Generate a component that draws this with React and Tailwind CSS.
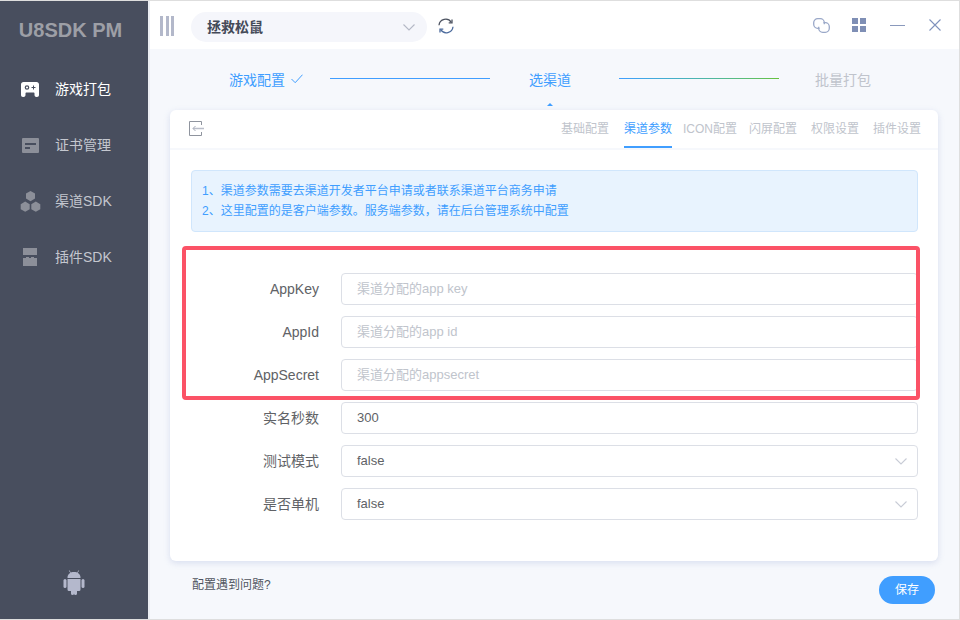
import React from "react";

const FONT = "[font-family:'Liberation_Sans','Noto_Sans_CJK_SC',sans-serif]";

function GameIcon() {
  return (
    <svg width="18" height="15" viewBox="0 0 18 15" fill="currentColor">
      <path fillRule="evenodd" d="M2.500 0h13C17 0 18 1 18 2.500V13c0 1.200-.8 2-2 2h-.5c-1.200 0-2-.8-2-2v-1.500c0-.6-.4-1-1-1h-7c-.6 0-1 .4-1 1V13c0 1.200-.8 2-2 2H2c-1.200 0-2-.8-2-2V2.500C0 1 1 0 2.500 0zM6 3.200a2.300 2.300 0 100 4.600 2.300 2.300 0 000-4.600zm0 1.200a1.100 1.100 0 110 2.200 1.100 1.100 0 010-2.200zM12 3.500V5h-1.500v1H12v1.500h1V6h1.500V5H13V3.500h-1z" />
    </svg>
  );
}

function CertIcon() {
  return (
    <svg width="17" height="15" viewBox="0 0 17 15" fill="currentColor">
      <path fillRule="evenodd" d="M1 0h15a1 1 0 011 1v13a1 1 0 01-1 1H1a1 1 0 01-1-1V1a1 1 0 011-1zm2 5v2h11V5H3zm0 4v2h5V9H3z" />
    </svg>
  );
}

function HexIcon() {
  return (
    <svg width="21" height="21" viewBox="0 0 21 21" fill="currentColor">
      <path d="M10.500 0l4.500 2.600v5L10.500 10.200 6 7.600v-5z" />
      <path d="M5.200 10.600l4.500 2.600v5l-4.500 2.600L.7 18.200v-5z" />
      <path d="M15.800 10.600l4.500 2.600v5l-4.500 2.600-4.500-2.600v-5z" />
    </svg>
  );
}

function PluginIcon() {
  return (
    <svg width="14" height="18" viewBox="0 0 14 18" fill="currentColor">
      <path d="M0 0h14v7H0z" />
      <path d="M0 10h3V9h3v1h2V9h3v1h3v8H0z" />
    </svg>
  );
}

function AndroidIcon() {
  return (
    <svg width="22" height="25" viewBox="0 0 22 25" fill="currentColor">
      <path d="M4.500 7.500C4.500 4 7.500 2 11 2s6.500 2 6.500 5.500V8h-13z" />
      <path d="M6.300.3l1.800 2.400-.5.4L5.800.7zM15.700.3l.5.4-1.800 2.400-.5-.4z" />
      <path d="M4.500 9h13v10.500a1.500 1.500 0 01-1.500 1.500h-2v2.500a1.500 1.500 0 01-3 0V21h0v2.500a1.500 1.500 0 01-3 0V21H6a1.500 1.500 0 01-1.500-1.500z" />
      <rect x="0.500" y="9" width="3" height="9" rx="1.500" />
      <rect x="18.500" y="9" width="3" height="9" rx="1.500" />
    </svg>
  );
}

function BackIcon() {
  return (
    <svg className="-mt-[2px]" width="15" height="15" viewBox="0 0 15 15" fill="none">
      <path d="M12.500 4V.5H.5v14h12V11" stroke="#8f949e" />
      <path d="M15 7.500H4" stroke="#b9bdc9" strokeWidth="1.500" />
      <path d="M6.500 5L4 7.500 6.500 10" stroke="#a8adba" />
    </svg>
  );
}

function LinkIcon() {
  return (
    <svg width="17" height="15" viewBox="0 0 17 15" fill="none" stroke="#9aa8c8" strokeWidth="1.300">
      <path d="M6.500 10.300H4.700a4 4 0 01-4-4V4.700a4 4 0 014-4h2.600a4 4 0 014 4v1.600" />
      <path d="M10.500 4.700h1.800a4 4 0 014 4v1.600a4 4 0 01-4 4H9.700a4 4 0 01-4-4V8.700" />
    </svg>
  );
}

function RefreshIcon() {
  return (
    <svg width="16" height="16" viewBox="0 0 16 16" fill="none" strokeWidth="1.300">
      <path d="M1 7.200A6.700 6.700 0 0 1 13.300 4.300" stroke="#4d5361" />
      <path d="M14 1.500v3.300h-3.300" stroke="#4d5361" />
      <path d="M15 8.800A6.700 6.700 0 0 1 2.700 11.700" stroke="#4b6a9c" />
      <path d="M2 14.500v-3.300h3.300" stroke="#4b6a9c" />
    </svg>
  );
}

function Chevron({ color }) {
  return (
    <svg width="12" height="7" viewBox="0 0 12 7" fill="none" stroke={color} strokeWidth="1.100">
      <path d="M.5.5L6 6l5.500-5.500" />
    </svg>
  );
}

function GridIcon() {
  return (
    <div className="grid grid-cols-2 gap-[2px] w-[14px] h-[14px]">
      <span className="bg-[#7f8fb5]" />
      <span className="bg-[#7f8fb5]" />
      <span className="bg-[#7f8fb5]" />
      <span className="bg-[#7f8fb5]" />
    </div>
  );
}

function MenuItem({ icon, label, active }) {
  return (
    <div className={`flex items-center h-14 ${active ? "text-white" : "text-[#c4c7cf]"}`}>
      <span className={`w-[55px] shrink-0 flex justify-center pl-[5px] ${active ? "text-white" : "text-[#8c8f99]"}`}>
        {icon}
      </span>
      <span className="text-sm">{label}</span>
    </div>
  );
}

function Sidebar() {
  return (
    <aside className="w-[148px] shrink-0 bg-[#484e5e] flex flex-col items-stretch">
      <div className="h-[58px] flex items-center justify-center text-[20px] font-bold text-[#9d9fa6] pr-[7px]">
        U8SDK PM
      </div>
      <nav className="mt-[2px]">
        <MenuItem icon={<GameIcon />} label="游戏打包" active />
        <MenuItem icon={<CertIcon />} label="证书管理" />
        <MenuItem icon={<HexIcon />} label="渠道SDK" />
        <MenuItem icon={<PluginIcon />} label="插件SDK" />
      </nav>
      <div className="mt-auto mb-[24px] flex justify-center text-[#b4b8cc]">
        <AndroidIcon />
      </div>
    </aside>
  );
}

function Header() {
  return (
    <header className="h-[48px] bg-white flex items-center pl-[10px] pr-[18px] shrink-0">
      <div className="flex gap-[2.500px] h-5 w-[14px] mt-[2px]">
        <span className="w-[3px] bg-[#b3b8ca]" />
        <span className="w-[3px] bg-[#b3b8ca]" />
        <span className="w-[3px] bg-[#b3b8ca]" />
      </div>
      <div className="ml-[17px] mt-[4px] w-[236px] h-[30px] bg-[#f5f6fb] rounded-full flex items-center justify-between pl-4 pr-[12px]">
        <span className="text-sm font-bold text-[#444a58] -mt-px">拯救松鼠</span>
        <Chevron color="#b4b8c6" />
      </div>
      <div className="ml-[11px] mt-[2px]">
        <RefreshIcon />
      </div>
      <div className="ml-auto flex items-center">
        <LinkIcon />
        <div className="ml-[22px]">
          <GridIcon />
        </div>
        <span className="ml-[24px] w-[15px] h-px bg-[#8a99bc]" />
        <svg className="ml-[24px]" width="12" height="12" viewBox="0 0 12 12" fill="none" stroke="#7f92bd" strokeWidth="1.100">
          <path d="M.5.5l11 11M11.500.5l-11 11" />
        </svg>
      </div>
    </header>
  );
}

function Steps() {
  return (
    <div className="h-[61px] shrink-0 flex items-start pt-[21px] pl-[79px] text-sm">
      <span className="text-[#409eff] w-[56px] whitespace-nowrap">游戏配置</span>
      <svg className="ml-[6px] mt-[4px]" width="12" height="10" viewBox="0 0 12 10" fill="none" stroke="#409eff" strokeWidth="1">
        <path d="M.5 5l3.700 3.700L11.500.7" />
      </svg>
      <div className="w-[160px] h-px bg-[#409eff] ml-[27px] mt-[8px]" />
      <span className="text-[#409eff] ml-[39px] relative">
        选渠道
        <span className="absolute left-[18px] top-[33px] w-0 h-0 border-x-[3px] border-x-transparent border-b-[3px] border-b-[#409eff]" />
      </span>
      <div className="w-[160px] h-px bg-gradient-to-r from-[#409eff] to-[#67c23a] ml-[48px] mt-[8px]" />
      <span className="text-[#c0c4cc] ml-[36px]">批量打包</span>
    </div>
  );
}

function Tabs() {
  const tabs = [
    ["基础配置", "ml-0"],
    ["渠道参数", "ml-[15px]"],
    ["ICON配置", "ml-[11px]"],
    ["闪屏配置", "ml-[12px]"],
    ["权限设置", "ml-[14px]"],
    ["插件设置", "ml-[14px]"],
  ];
  return (
    <div className="h-[40px] flex items-center pl-[19px] pr-[17px] border-b-2 border-[#f6f8fc]">
      <BackIcon />
      <div className="ml-auto flex self-stretch text-xs">
        {tabs.map(([name, gap], i) => (
          <div
            key={name}
            className={`${gap} h-[38px] pt-px flex items-center border-b-2 ${
              i === 1 ? "text-[#409eff] border-[#409eff]" : "text-[#c0c4cc] border-transparent"
            }`}
          >
            {name}
          </div>
        ))}
      </div>
    </div>
  );
}

function Field({ label, placeholder, value, select }) {
  return (
    <div className="flex items-center h-8">
      <label className="w-[128px] -mt-px text-right text-sm text-[#606266] shrink-0">{label}</label>
      <div className="ml-[22px] flex-1 h-8 bg-white border border-[#dcdfe6] rounded-[4px] flex items-center justify-between pl-[15px] pr-[10px] text-[13px]">
        {placeholder ? (
          <span className="text-[#c0c4cc]">{placeholder}</span>
        ) : (
          <span className="text-[#606266]">{value}</span>
        )}
        {select && <Chevron color="#c8ccd6" />}
      </div>
    </div>
  );
}

export default function App() {
  return (
    <div className={`w-[960px] h-[620px] overflow-hidden flex bg-[#dedede] pt-px pr-px pb-px ${FONT}`}>
      <Sidebar />
      <main className="flex-1 border-l-2 border-[#eceef3] flex flex-col bg-[#f6f8fc] min-w-0">
        <Header />
        <Steps />
        <div className="ml-[20px] mr-[21px] h-[451px] shrink-0 bg-white rounded-[6px] shadow-[0_2px_6px_rgba(180,190,225,0.45)]">
          <Tabs />
          <div className="ml-[21px] mr-[20px] mt-5 h-[62px] bg-[#e8f3fe] border border-[#d0e6fc] rounded-[4px] flex flex-col justify-center gap-[6px] pl-[10px] text-xs leading-[14px] text-[#409eff]">
            <p>1、渠道参数需要去渠道开发者平台申请或者联系渠道平台商务申请</p>
            <p>2、这里配置的是客户端参数。服务端参数，请在后台管理系统中配置</p>
          </div>
          <div className="relative mt-[41px] ml-[21px] mr-[20px]">
            <div className="flex flex-col gap-[11px]">
              <Field label="AppKey" placeholder="渠道分配的app key" />
              <Field label="AppId" placeholder="渠道分配的app id" />
              <Field label="AppSecret" placeholder="渠道分配的appsecret" />
              <Field label="实名秒数" value="300" />
              <Field label="测试模式" value="false" select />
              <Field label="是否单机" value="false" select />
            </div>
            <div className="absolute left-[-9px] top-[-27px] w-[738px] h-[154px] border-4 border-[#fb5266] rounded-[4px]" />
          </div>
        </div>
        <div className="flex items-center justify-between pl-[42px] pr-[24px] mt-[15px] text-xs">
          <span className="text-[#50555f] -mt-[10px]">配置遇到问题?</span>
          <button className="w-14 h-7 rounded-full bg-[#409eff] text-white text-xs">保存</button>
        </div>
      </main>
    </div>
  );
}
